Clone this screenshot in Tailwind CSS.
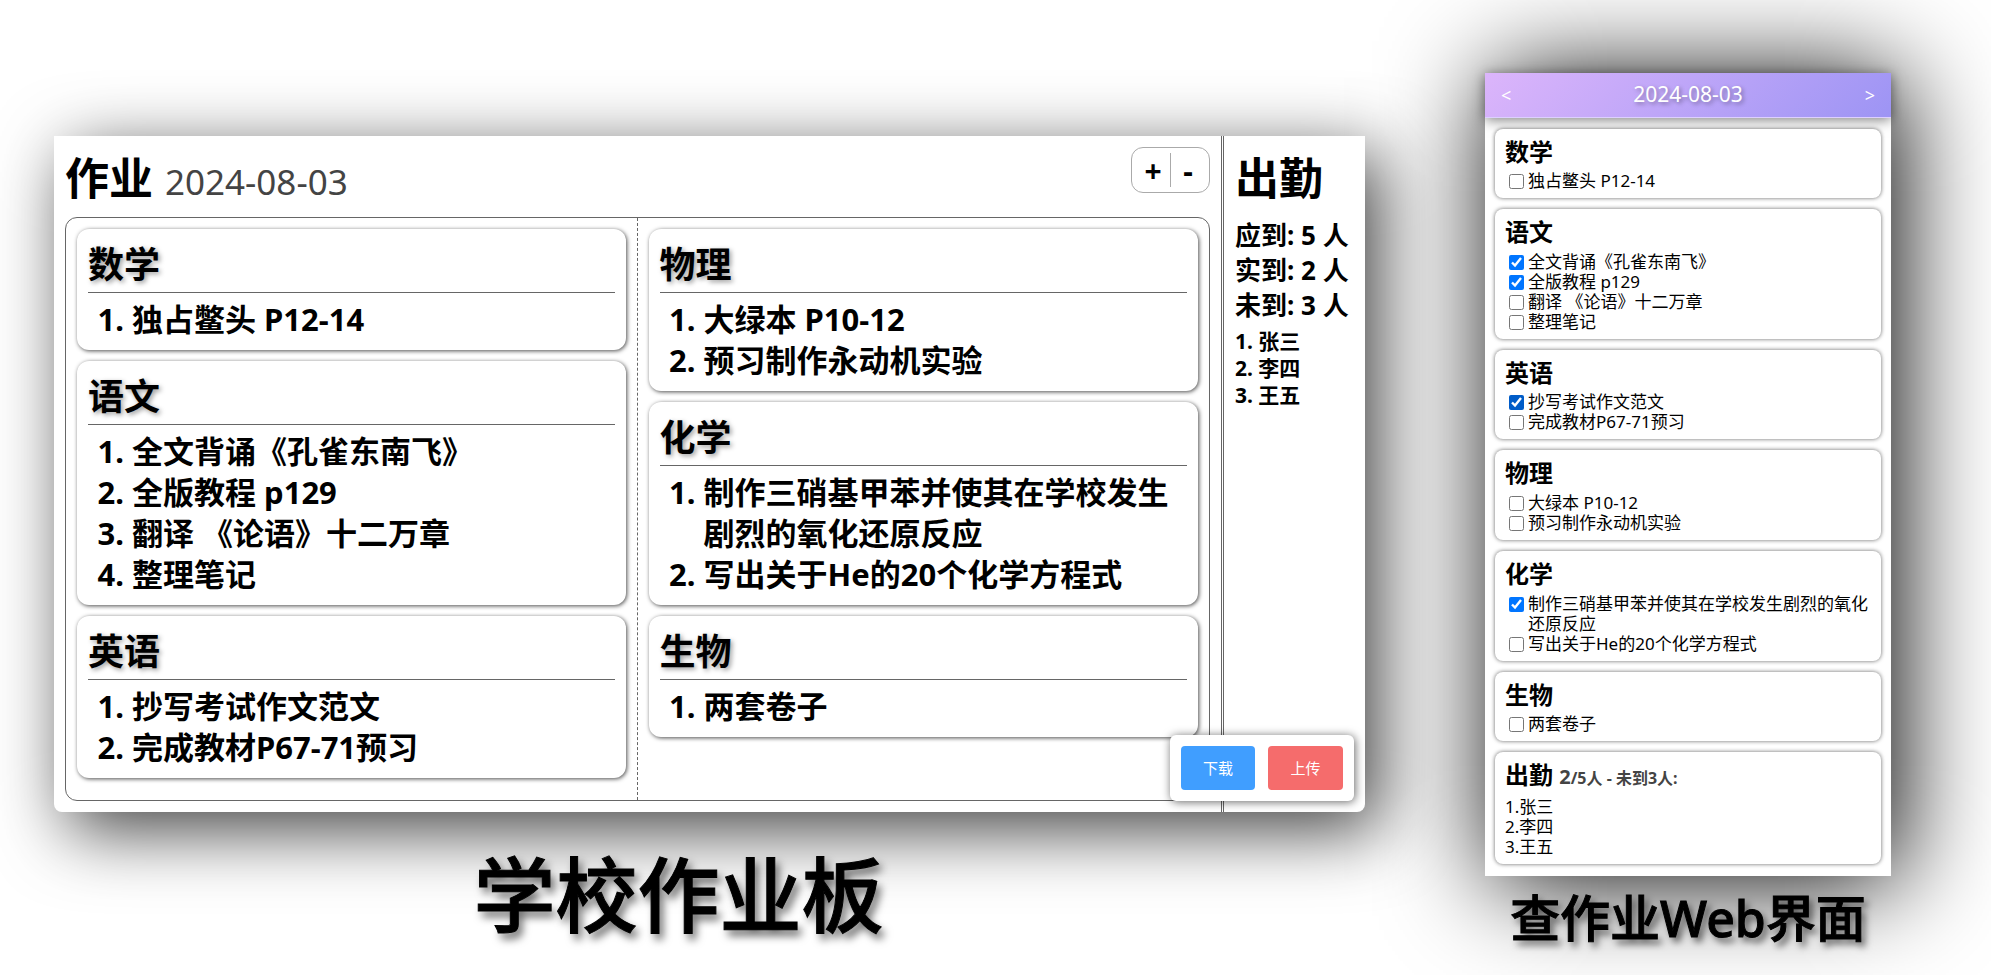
<!DOCTYPE html>
<html lang="zh-CN">
<head>
<meta charset="utf-8">
<title>学校作业板</title>
<script src="https://cdn.jsdelivr.net/npm/@tailwindcss/browser@4"></script>
</head>
<body class="min-h-screen overflow-x-hidden bg-white font-['Noto_Sans','Noto_Sans_CJK_SC',sans-serif] text-black">
<main class="flex items-start justify-between gap-30 pl-[54px] pr-[100px]">

  <figure class="mt-34 flex max-w-[1311px] flex-1 flex-col items-center">
    <div class="relative flex min-h-[676px] w-full rounded-b-lg bg-white shadow-[14px_18px_70px_rgba(0,0,0,0.75)]">
      <section class="flex flex-1 flex-col p-[11px]">
        <header class="flex h-[70px] items-start justify-between">
          <div class="flex items-baseline gap-3">
            <h1 class="text-[44px] leading-[62px] font-bold">作业</h1>
            <time class="text-[35px] leading-[62px] text-[#444]">2024-08-03</time>
          </div>
          <div class="flex h-[46px] w-[79px] items-center rounded-xl border border-[#aaa] text-[30px] font-bold">
            <button type="button" aria-label="放大" class="flex h-[34px] flex-1 items-center justify-center border-r border-[#aaa] pl-1">+</button>
            <button type="button" aria-label="缩小" class="flex h-[34px] flex-1 items-center justify-center pr-1">-</button>
          </div>
        </header>
        <div class="grid flex-1 grid-cols-2 rounded-xl border border-[#666] text-[31px] leading-[41px] font-bold">
          <div class="flex flex-col gap-[11px] border-r border-dashed border-[#666] p-[11px]">
            <article class="rounded-xl px-[11px] pt-[11px] pb-[10px] shadow-[1px_1px_4px_rgba(0,0,0,0.7)]">
              <h2 class="mb-[6px] border-b border-[#666] pb-[2px] text-[36px] leading-[50px] text-shadow-[2px_2px_5px_rgba(0,0,0,0.4)]">数学</h2>
              <ol class="list-decimal pl-11"><li>独占鳖头 P12-14</li></ol>
            </article>
            <article class="rounded-xl px-[11px] pt-[11px] pb-[10px] shadow-[1px_1px_4px_rgba(0,0,0,0.7)]">
              <h2 class="mb-[6px] border-b border-[#666] pb-[2px] text-[36px] leading-[50px] text-shadow-[2px_2px_5px_rgba(0,0,0,0.4)]">语文</h2>
              <ol class="list-decimal pl-11"><li>全文背诵《孔雀东南飞》</li><li>全版教程 p129</li><li>翻译 《论语》十二万章</li><li>整理笔记</li></ol>
            </article>
            <article class="rounded-xl px-[11px] pt-[11px] pb-[10px] shadow-[1px_1px_4px_rgba(0,0,0,0.7)]">
              <h2 class="mb-[6px] border-b border-[#666] pb-[2px] text-[36px] leading-[50px] text-shadow-[2px_2px_5px_rgba(0,0,0,0.4)]">英语</h2>
              <ol class="list-decimal pl-11"><li>抄写考试作文范文</li><li>完成教材P67-71预习</li></ol>
            </article>
          </div>
          <div class="flex flex-col gap-[11px] p-[11px]">
            <article class="rounded-xl px-[11px] pt-[11px] pb-[10px] shadow-[1px_1px_4px_rgba(0,0,0,0.7)]">
              <h2 class="mb-[6px] border-b border-[#666] pb-[2px] text-[36px] leading-[50px] text-shadow-[2px_2px_5px_rgba(0,0,0,0.4)]">物理</h2>
              <ol class="list-decimal pl-11"><li>大绿本 P10-12</li><li>预习制作永动机实验</li></ol>
            </article>
            <article class="rounded-xl px-[11px] pt-[11px] pb-[10px] shadow-[1px_1px_4px_rgba(0,0,0,0.7)]">
              <h2 class="mb-[6px] border-b border-[#666] pb-[2px] text-[36px] leading-[50px] text-shadow-[2px_2px_5px_rgba(0,0,0,0.4)]">化学</h2>
              <ol class="list-decimal pl-11"><li>制作三硝基甲苯并使其在学校发生剧烈的氧化还原反应</li><li>写出关于He的20个化学方程式</li></ol>
            </article>
            <article class="rounded-xl px-[11px] pt-[11px] pb-[10px] shadow-[1px_1px_4px_rgba(0,0,0,0.7)]">
              <h2 class="mb-[6px] border-b border-[#666] pb-[2px] text-[36px] leading-[50px] text-shadow-[2px_2px_5px_rgba(0,0,0,0.4)]">生物</h2>
              <ol class="list-decimal pl-11"><li>两套卷子</li></ol>
            </article>
          </div>
        </div>
      </section>
      <aside class="w-36 border-l-3 border-double border-[#666] p-[11px] font-bold">
        <h2 class="mb-[9px] text-[44px] leading-[62px]">出勤</h2>
        <div class="text-[26px] leading-[35px] whitespace-nowrap">
          <p>应到: 5 人</p><p>实到: 2 人</p><p>未到: 3 人</p>
        </div>
        <ol class="mt-[5px] text-[21px] leading-[27px]">
          <li>1. 张三</li><li>2. 李四</li><li>3. 王五</li>
        </ol>
      </aside>
      <div class="absolute right-[11px] bottom-[11px] flex gap-[13px] rounded-md bg-white p-[11px] text-[15px] text-white shadow-[1px_1px_10px_rgba(0,0,0,0.6)]">
        <button type="button" class="h-11 w-[74px] rounded bg-[#409eff]">下载</button>
        <button type="button" class="h-11 w-[75px] rounded bg-[#f56c6c]">上传</button>
      </div>
    </div>
    <figcaption class="relative mt-[22px] pr-[62px] text-[82px] leading-[120px] font-medium [-webkit-text-stroke:1px_black] text-shadow-[4px_6px_8px_rgba(0,0,0,0.6)]">学校作业板</figcaption>
  </figure>

  <figure class="mt-[73px] flex w-[406px] flex-col items-center">
    <div class="w-full bg-white shadow-[8px_4px_100px_rgba(0,0,0,1)]">
      <header class="flex h-[45px] items-center justify-between border-b border-[#ddd0ff] bg-linear-135 from-[#dcb5fb] to-[#9d94f4] px-4 text-[21px] text-white shadow-[0_2px_12px_rgba(0,0,0,0.5)] text-shadow-[2px_2px_4px_rgba(0,0,0,0.35)]">
        <button type="button" aria-label="前一天" class="text-lg">&lt;</button>
        <time>2024-08-03</time>
        <button type="button" aria-label="后一天" class="text-lg">&gt;</button>
      </header>
      <div class="flex flex-col gap-[11px] px-[10px] pt-[11px] pb-3 text-[17px] leading-5">
        <section class="rounded-lg bg-white px-[10px] pt-1 pb-[7px] shadow-[0_0_4px_rgba(0,0,0,0.6)]">
          <h2 class="text-[24px] leading-[38px] font-bold">数学</h2>
          <label class="flex gap-1 pl-1"><input type="checkbox" class="mt-[3px] size-[15px] shrink-0"><span>独占鳖头 P12-14</span></label>
        </section>
        <section class="rounded-lg bg-white px-[10px] pt-1 pb-[7px] shadow-[0_0_4px_rgba(0,0,0,0.6)]">
          <h2 class="mb-px text-[24px] leading-[38px] font-bold">语文</h2>
          <label class="flex gap-1 pl-1"><input type="checkbox" checked class="mt-[3px] size-[15px] shrink-0"><span>全文背诵《孔雀东南飞》</span></label>
          <label class="flex gap-1 pl-1"><input type="checkbox" checked class="mt-[3px] size-[15px] shrink-0"><span>全版教程 p129</span></label>
          <label class="flex gap-1 pl-1"><input type="checkbox" class="mt-[3px] size-[15px] shrink-0"><span>翻译 《论语》十二万章</span></label>
          <label class="flex gap-1 pl-1"><input type="checkbox" class="mt-[3px] size-[15px] shrink-0"><span>整理笔记</span></label>
        </section>
        <section class="rounded-lg bg-white px-[10px] pt-1 pb-[7px] shadow-[0_0_4px_rgba(0,0,0,0.6)]">
          <h2 class="text-[24px] leading-[38px] font-bold">英语</h2>
          <label class="flex gap-1 pl-1"><input type="checkbox" checked class="mt-[3px] size-[15px] shrink-0 accent-[#005cc8]"><span>抄写考试作文范文</span></label>
          <label class="flex gap-1 pl-1"><input type="checkbox" class="mt-[3px] size-[15px] shrink-0"><span>完成教材P67-71预习</span></label>
        </section>
        <section class="rounded-lg bg-white px-[10px] pt-1 pb-[7px] shadow-[0_0_4px_rgba(0,0,0,0.6)]">
          <h2 class="mb-px text-[24px] leading-[38px] font-bold">物理</h2>
          <label class="flex gap-1 pl-1"><input type="checkbox" class="mt-[3px] size-[15px] shrink-0"><span>大绿本 P10-12</span></label>
          <label class="flex gap-1 pl-1"><input type="checkbox" class="mt-[3px] size-[15px] shrink-0"><span>预习制作永动机实验</span></label>
        </section>
        <section class="rounded-lg bg-white px-[10px] pt-1 pb-[7px] shadow-[0_0_4px_rgba(0,0,0,0.6)]">
          <h2 class="mb-px text-[24px] leading-[38px] font-bold">化学</h2>
          <label class="flex gap-1 pl-1"><input type="checkbox" checked class="mt-[3px] size-[15px] shrink-0"><span>制作三硝基甲苯并使其在学校发生剧烈的氧化还原反应</span></label>
          <label class="flex gap-1 pl-1"><input type="checkbox" class="mt-[3px] size-[15px] shrink-0"><span>写出关于He的20个化学方程式</span></label>
        </section>
        <section class="rounded-lg bg-white px-[10px] pt-1 pb-[7px] shadow-[0_0_4px_rgba(0,0,0,0.6)]">
          <h2 class="text-[24px] leading-[38px] font-bold">生物</h2>
          <label class="flex gap-1 pl-1"><input type="checkbox" class="mt-[3px] size-[15px] shrink-0"><span>两套卷子</span></label>
        </section>
        <section class="rounded-lg bg-white px-[10px] pt-1 pb-[7px] shadow-[0_0_4px_rgba(0,0,0,0.6)]">
          <h2 class="mb-[3px] text-[24px] leading-[38px] font-bold">出勤 <span class="text-base text-[#444]"><span class="text-[20px]">2</span>/5人 - 未到3人:</span></h2>
          <ol><li>1.张三</li><li>2.李四</li><li>3.王五</li></ol>
        </section>
      </div>
    </div>
    <figcaption class="mt-3 text-[50px] leading-[60px] font-medium whitespace-nowrap [-webkit-text-stroke:1px_black] text-shadow-[4px_5px_7px_rgba(0,0,0,0.6)]">查作业Web界面</figcaption>
  </figure>
</main>
</body>
</html>
